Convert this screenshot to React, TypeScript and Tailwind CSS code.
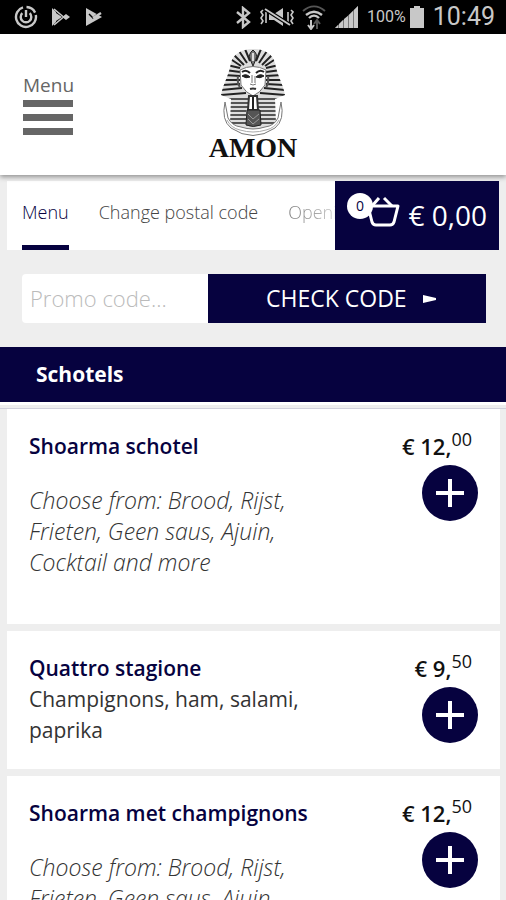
import React from 'react';

interface Dish {
  name: string;
  euros: string;
  cents: string;
  description?: string;
  choices?: string;
}

const dishes: Dish[] = [
  {
    name: 'Shoarma schotel',
    euros: '12',
    cents: '00',
    choices: 'Choose from: Brood, Rijst, Frieten, Geen saus, Ajuin, Cocktail and more',
  },
  {
    name: 'Quattro stagione',
    euros: '9',
    cents: '50',
    description: 'Champignons, ham, salami, paprika',
  },
  {
    name: 'Shoarma met champignons',
    euros: '12',
    cents: '50',
    choices: 'Choose from: Brood, Rijst, Frieten, Geen saus, Ajuin, Cocktail and more',
  },
];

const StatusBar: React.FC = () => (
  <div className="flex h-[34px] items-center justify-between bg-black pr-[11px] pl-[14px] font-['Roboto',sans-serif] text-[#c8c8c8]">
    <div className="flex items-center gap-[13px]">
      <svg width="24" height="24" viewBox="0 0 24 24" fill="none" stroke="currentColor" strokeWidth="2.4">
        <path d="M9 2.4A10 10 0 1 0 21.8 10M12.5 2a10 10 0 0 1 8.6 5.6" />
        <path d="M8.3 8.2a5.3 5.3 0 1 0 7.4 0M12 5v7" />
      </svg>
      <svg width="20" height="20" viewBox="0 0 20 20" fill="none" stroke="currentColor" strokeWidth="1.6">
        <path d="M1 1v18L5 15V5Z" fill="currentColor" stroke="none" />
        <path d="M3 2l12 10M3 18L15 8" />
        <path d="M5 6v8l6-4Z" fill="currentColor" stroke="none" />
        <path d="M15 7l4 3-4 3-3-3Z" fill="currentColor" stroke="none" />
      </svg>
      <svg width="20" height="20" viewBox="0 0 20 20" fill="none">
        <path d="M2 1l16 9L2 19Z" fill="currentColor" />
        <path d="M5 7l4 4 8-7" stroke="#000" strokeWidth="1.4" />
        <path d="M9 11l8-5" stroke="currentColor" strokeWidth="2.4" />
      </svg>
    </div>
    <div className="flex items-center">
      <svg width="17" height="23" viewBox="0 0 17 23" fill="none" stroke="currentColor" strokeWidth="2.4">
        <path d="M2 6l12 10-6 5V2l6 5L2 17" />
      </svg>
      <svg className="ml-2" width="34" height="22" viewBox="0 0 34 22" fill="none" stroke="currentColor" strokeWidth="1.6">
        <path d="M3 4l-2 2 2 3-2 3 2 3-2 3M6 6v11M31 4l2 2-2 3 2 3-2 3 2 3M28 6v11" />
        <path d="M9 8h5l9-6v18l-9-6H9Z" fill="currentColor" stroke="none" />
        <path d="M5 3l25 16" stroke="#000" strokeWidth="4" />
        <path d="M5 3l25 16" strokeWidth="2" />
      </svg>
      <svg className="ml-2" width="24" height="26" viewBox="0 0 24 26" fill="none" stroke="currentColor" strokeWidth="2">
        <path d="M1 7c7-6 15-6 22 0" stroke="#555" />
        <path d="M4 11c5-4 11-4 16 0M7 14c3-3 7-3 10 0" strokeWidth="2.4" />
        <path d="M9 16v8M6 21l3 4 3-4" />
        <path d="M15 25v-8M12 20l3-4 3 4" stroke="#555" />
      </svg>
      <svg className="ml-2" width="25" height="24" viewBox="0 0 25 24" fill="currentColor">
        <path d="M24 1v22h-4V5ZM19 6v17h-4V10ZM14 11v12h-4v-9ZM9 15v8H5v-4ZM4 20v3H1Z" />
        <path d="M1 23L24 1v22Z" opacity="0.6" />
      </svg>
      <span className="ml-2 text-base">100%</span>
      <svg className="ml-[3px]" width="16" height="23" viewBox="0 0 16 23" fill="currentColor">
        <path d="M5 0h6v2h4v20H1V2h4Z" />
      </svg>
      <span className="ml-2 text-[25px] leading-8">10:49</span>
    </div>
  </div>
);

const Pharaoh: React.FC = () => (
  <svg width="66" height="90" viewBox="0 0 66 90" fill="none" stroke="#222">
    <defs>
      <clipPath id="nemes">
        <path d="M33 1C22 1 13 6 11 15C9 27 3 36 1 47L11 51L10 76Q33 88 56 76L55 51L65 47C63 36 57 27 55 15C53 6 44 1 33 1Z" />
      </clipPath>
    </defs>
    <g clipPath="url(#nemes)">
      <path fill="#ddd" stroke="none" d="M0 0h66v90H0z" />
      <path
        strokeWidth="2"
        d="M7 17L20 20M5 22L20 24M4 27L20 28M3 32H20M2 37L20 36M0 42L22 40M0 47L26 45M59 17L46 20M61 22L46 24M62 27L46 28M63 32H46M64 37L46 36M66 42L44 40M66 47L40 45"
      />
      <path stroke="#555" strokeWidth="2" d="M8 51h20M38 51h20M8 55h20M38 55h20M8 59h20M38 59h20M8 63h18M40 63h18M8 67h18M40 67h18M8 71h18M40 71h18M8 75h18M40 75h18" />
      <path strokeWidth="2" d="M9 10l12 8M13 6l11 11M19 3l8 12M25 1l5 12M57 10l-12 8M53 6L42 17M47 3l-8 12M41 1l-5 12" />
    </g>
    <path fill="#fff" stroke="#777" strokeWidth="1" d="M20 22Q33 15 46 22L45 37Q40 45 33 48Q26 45 21 37Z" />
    <path fill="#777" stroke="#222" strokeWidth="1" d="M33 2q-5 4-3 9l3 7 3-7q2-5-3-9Z" />
    <path fill="#ddd" stroke="none" d="M32 5h2v8h-2z" />
    <path strokeWidth="2" d="M22 24q4-3 8 1M36 25q4-4 8-1" />
    <path fill="#222" strokeWidth="1" d="M22 28q4-3 8 1-4 2-8-1ZM36 29q4-4 8-1-4 3-8 1Z" />
    <path stroke="#777" strokeWidth="1" d="M32 27v8M35 28v7M30 36q3 2 6 0" />
    <path stroke="#333" strokeWidth="2" d="M30 41q3-1 6 0" />
    <path stroke="#555" strokeWidth="2" d="M18 28q-1 8 2 11M48 28q1 8-2 11" />
    <path fill="#fff" stroke="#333" strokeWidth="2" d="M29 48l8 0 1 14H28Z" />
    <path strokeWidth="2" d="M33 49v13" />
    <path fill="#555" stroke="#222" strokeWidth="1" d="M27 62h13l1 15q-8 3-15 0Z" />
    <path stroke="#999" strokeWidth="1" d="M28 66l5 5 6-5M28 71l5 5 6-5" />
    <path fill="#fff" stroke="#777" strokeWidth="1" d="M5 54Q1 72 11 80Q33 95 55 80Q65 72 61 54L58 70Q54 78 45 79Q33 83 21 79Q12 78 8 70Z" />
    <path stroke="#aaa" strokeWidth="1" d="M7 72Q11 80 20 82Q33 86 46 82Q55 80 59 72" />
  </svg>
);

const Header: React.FC = () => (
  <header className="relative grid h-[141px] grid-cols-3 bg-white shadow-[0_2px_5px_rgba(0,0,0,0.4)]">
    <button type="button" className="flex flex-col items-start pt-9 pl-[23px] text-[#666]">
      <span className="text-[19px] leading-[30px]">Menu</span>
      <svg width="50" height="36" viewBox="0 0 50 36" fill="#666">
        <path d="M0 0h50v7H0zM0 14h50v7H0zM0 28h50v7H0z" />
      </svg>
    </button>
    <a href="#home" className="flex flex-col items-center pt-[14px]">
      <Pharaoh />
      <span className="-mt-1 font-['Liberation_Serif',serif] text-[28px] leading-7 font-bold text-[#111]">AMON</span>
    </a>
  </header>
);

const NavBar: React.FC = () => (
  <nav className="mx-[7px] mt-[6px] flex h-[69px] bg-white text-lg whitespace-nowrap">
    <div className="flex min-w-0 flex-1 gap-[30px] overflow-hidden pl-[15px] font-light text-[#444]">
      <a href="#menu" className="shrink-0 border-b-5 border-[#06023f] leading-[63px] text-[#06023f]">Menu</a>
      <a href="#postal" className="shrink-0 leading-[63px]">Change postal code</a>
      <a href="#hours" className="shrink-0 bg-linear-to-r from-[#777] to-[#ccc] to-40% bg-clip-text leading-[63px] text-transparent">
        Opening hours
      </a>
    </div>
    <button type="button" className="relative flex w-[164px] shrink-0 items-center justify-end gap-2 bg-[#06023f] pr-3 text-white">
      <svg width="34" height="40" viewBox="0 0 34 40" fill="none" stroke="currentColor" strokeWidth="3" strokeLinejoin="round">
        <path d="M2 10h30l-4 16q-1 3-4 3H10q-3 0-4-3Z" />
        <path d="M13 2l-7 8M18 2l8 8" />
      </svg>
      <span className="text-[28px]">€ 0,00</span>
      <span className="absolute top-3 left-3 flex size-[26px] items-center justify-center rounded-full bg-white text-sm text-[#06023f]">
        0
      </span>
    </button>
  </nav>
);

const PromoForm: React.FC = () => (
  <form className="mr-5 ml-[22px] mt-6 flex h-[49px]" onSubmit={(e) => e.preventDefault()}>
    <input
      type="text"
      aria-label="Promo code"
      placeholder="Promo code..."
      className="w-2/5 rounded-l bg-white px-2 text-[22px] font-light placeholder:text-[#bbb]"
    />
    <button type="submit" className="flex flex-1 items-center justify-center gap-4 bg-[#06023f] pl-2 text-[23px] text-white">
      CHECK CODE
      <svg width="13" height="8" viewBox="0 0 13 8" fill="currentColor">
        <path d="M0 0l13 3v2L0 8Z" />
      </svg>
    </button>
  </form>
);

const DishCard: React.FC<{ dish: Dish }> = ({ dish }) => (
  <article className="flex justify-between bg-white px-[22px] pt-[22px] pb-[23px] text-[21px] leading-[31px]">
    <div className="w-[300px]">
      <h3 className="font-semibold whitespace-nowrap text-[#06023f]">{dish.name}</h3>
      {dish.description && <p className="text-[#333]">{dish.description}</p>}
      {dish.choices && <p className="my-[23px] text-[23px] leading-[31px] font-light text-[#333] italic">{dish.choices}</p>}
    </div>
    <div className="flex flex-col items-end">
      <p className="mr-[6px] text-[22px] leading-[31px] font-semibold text-[#111]">
        € {dish.euros},<sup className="text-lg leading-none font-medium">{dish.cents}</sup>
      </p>
      <button
        type="button"
        aria-label={`Add ${dish.name}`}
        className="mt-[3px] flex size-14 items-center justify-center rounded-full bg-[#06023f] text-white"
      >
        <svg width="28" height="28" viewBox="0 0 28 28" stroke="currentColor" strokeWidth="4">
          <path d="M14 0v28M0 14h28" />
        </svg>
      </button>
    </div>
  </article>
);

export default function App() {
  return (
    <div className="min-h-screen bg-[#eee] font-['Open_Sans',sans-serif]">
      <StatusBar />
      <Header />
      <NavBar />
      <PromoForm />
      <main className="mt-6">
        <h2 className="border-b-3 border-white bg-[#06023f] pl-9 text-[21px] leading-[55px] font-bold text-white">Schotels</h2>
        <div className="mt-[3px] flex flex-col gap-[7px] border-t border-[#d0d0dc] pr-[6px] pl-[7px]">
          {dishes.map((dish) => (
            <DishCard key={dish.name} dish={dish} />
          ))}
        </div>
      </main>
    </div>
  );
}
